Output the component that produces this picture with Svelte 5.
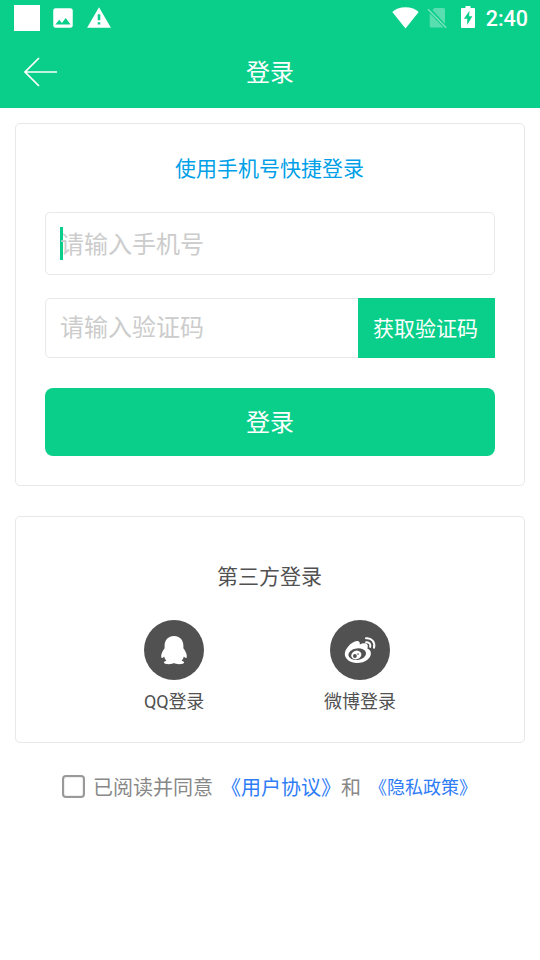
<script lang="ts">
	let phone = $state('');
	let code = $state('');
	let agreed = $state(false);
</script>

<div class="screen">
	<header>
		<div class="status">
			<div class="notices">
				<span class="square"></span>
				<svg width="26" height="26" viewBox="0 0 24 24" fill="#fff">
					<path d="M21 19V5c0-1.100-.9-2-2-2H5c-1.100 0-2 .9-2 2v14c0 1.100.9 2 2 2h14c1.100 0 2-.9 2-2zM8.500 13.500l2.500 3.010L14.500 12l4.500 6H5l3.500-4.500z" />
				</svg>
				<svg width="26" height="26" viewBox="0 0 24 24" fill="#fff">
					<path d="M1 21h22L12 2 1 21zm12.200-3h-2.400v-2h2.400v2zm0-4h-2.400V8.500h2.400V14z" />
				</svg>
			</div>
			<div class="system">
				<svg width="27" height="22" viewBox="0 0 27 22" fill="#fff">
					<path d="M13.500 21.500L.3 5C3.500 2.300 8 .3 13.500.3S23.500 2.300 26.700 5z" />
				</svg>
				<svg class="sim" width="20" height="22" viewBox="0 0 20 22">
					<path d="M7.500 1H16.500Q18 1 18 2.500V16.700L5.400 3.100zM2.700 6.300L16.500 20.500H4.200Q2.700 20.500 2.700 19z" fill="#fff" opacity=".32" />
					<path d="M1 2.300L19.200 20.700" stroke="#fff" stroke-width="1.500" opacity=".45" />
				</svg>
				<svg class="battery" width="14" height="22" viewBox="0 0 14 22">
					<path d="M4.500 0h5v2H13q1 0 1 1v18q0 1-1 1H1q-1 0-1-1V3q0-1 1-1h3.500z" fill="#fff" />
					<path d="M8.500 4.800L2.900 12.700h3.300v6.400l5.200-8.900H8.100z" fill="#0acf8b" />
				</svg>
				<span class="time">2:40</span>
			</div>
		</div>
		<div class="navbar">
			<button class="back" aria-label="返回">
				<svg width="36" height="32" viewBox="0 0 36 32" fill="none" stroke="#fff" stroke-width="1.700">
					<path d="M17 2L3 16l14 14M3 16h32" />
				</svg>
			</button>
			<h1>登录</h1>
		</div>
	</header>

	<main>
		<section class="card login">
			<h2>使用手机号快捷登录</h2>
			<div class="field phone">
				<span class="caret"></span>
				<input type="tel" placeholder="请输入手机号" bind:value={phone} />
			</div>
			<div class="field code">
				<input type="text" placeholder="请输入验证码" bind:value={code} />
				<button class="send">获取验证码</button>
			</div>
			<button class="submit">登录</button>
		</section>

		<section class="card third">
			<h2>第三方登录</h2>
			<div class="providers">
				<button class="provider">
					<svg width="60" height="60" viewBox="0 0 60 60">
						<circle cx="30" cy="30" r="30" fill="#515151" />
						<path
							d="M30 16c-5.900 0-9.400 4.300-9.400 9.800v2.400c-1.600 2.300-3.400 5.200-3.400 7.800 0 1.500.5 2.100 1 2 .7-.1 1.300-.7 1.900-1.500.4 1.700 1.100 3.100 2.200 4.200-1.500.5-2.400 1.100-2.400 1.900 0 1.300 2.300 1.600 4.900 1.600 2.300 0 4.200-.4 5.200-1.100 1 .7 2.900 1.100 5.200 1.100 2.600 0 4.900-.3 4.900-1.600 0-.8-.9-1.400-2.400-1.900 1.100-1.100 1.800-2.500 2.200-4.200.6.8 1.200 1.400 1.900 1.500.5.1 1-.5 1-2 0-2.600-1.800-5.500-3.400-7.800v-2.400C39.400 20.300 35.900 16 30 16z"
							fill="#fff"
						/>
					</svg>
					<span class="qq">QQ登录</span>
				</button>
				<button class="provider">
					<svg width="60" height="60" viewBox="0 0 60 60">
						<circle cx="30" cy="30" r="30" fill="#515151" />
						<path
							d="M28.400 21.300c-3-1-7.400 1.900-10.200 5.200-2.200 2.500-3.400 5-3.400 7.500 0 5.200 5.600 8.900 12.100 8.900 8.500 0 14-4.900 14-9.500 0-2.700-1.700-4.200-3.600-4.900.9-2.200.6-4-.7-4.700-1.700-.9-4.300-.5-6.900.6.3-1.500 0-2.700-1.300-3.100z"
							fill="#fff"
						/>
						<ellipse cx="27.200" cy="34.200" rx="8.900" ry="5.800" fill="#515151" transform="rotate(-7 27.200 34.200)" />
						<ellipse cx="26.300" cy="35" rx="5.200" ry="4.300" fill="#fff" transform="rotate(-20 26.300 35)" />
						<circle cx="24.900" cy="36" r="1.900" fill="#515151" />
						<circle cx="28" cy="34" r=".8" fill="#515151" />
						<path d="M36 18.200c5.400-.6 9.500 4 8 9.600M36.200 22.300c2.900-.4 4.700 1.800 4 4.600" fill="none" stroke="#fff" stroke-width="2" stroke-linecap="round" />
					</svg>
					<span>微博登录</span>
				</button>
			</div>
		</section>

		<div class="agreement">
			<label>
				<input type="checkbox" bind:checked={agreed} />
				<span>已阅读并同意</span>
			</label>
			<a class="terms" href="#terms">《用户协议》</a>
			<span>和</span>
			<a class="privacy" href="#privacy">《隐私政策》</a>
		</div>
	</main>
</div>

<style>
	:global(body) {
		background: #fff;
	}

	.screen {
		--green: #0acf8b;
		--line: #e8e8e8;
		box-sizing: border-box;
		width: 540px;
		height: 960px;
		overflow: hidden;
		background: #fff;
		font-family: Roboto, 'Noto Sans CJK SC', sans-serif;
	}

	.screen * {
		box-sizing: border-box;
	}

	svg {
		display: block;
	}

	button {
		padding: 0;
		border: 0;
		background: none;
		color: inherit;
		font: inherit;
	}

	h1,
	h2 {
		margin: 0;
		font-weight: 400;
		text-align: center;
	}

	header {
		height: 108px;
		background: var(--green);
		color: #fff;
	}

	.status {
		display: flex;
		justify-content: space-between;
		height: 36px;
		padding: 0 12px 0 14px;
	}

	.notices,
	.system {
		display: flex;
		align-items: center;
	}

	.notices {
		gap: 10px;
	}

	.square {
		width: 26px;
		height: 26px;
		background: #fff;
	}

	.system svg {
		margin-top: -1px;
	}

	.system .sim {
		margin: 0 14px 0 8px;
	}

	.system .battery {
		margin-top: -2px;
	}

	.time {
		margin-left: 11px;
		padding-top: 2px;
		font-size: 21.5px;
		font-weight: 500;
		line-height: 24px;
	}

	.navbar {
		display: grid;
		grid-template-columns: 60px 1fr 60px;
		align-items: center;
		height: 72px;
	}

	.back {
		padding-left: 22px;
	}

	h1 {
		padding-top: 2px;
		font-size: 24px;
		line-height: 36px;
	}

	main {
		padding: 15px;
	}

	.card {
		border: 1px solid var(--line);
		border-radius: 5px;
	}

	.login {
		height: 363px;
		padding: 30px 29px 29px;
	}

	.login h2 {
		margin-bottom: 28px;
		color: #009fe8;
	}

	h2 {
		padding-right: 1px;
		font-size: 21px;
		line-height: 30px;
	}

	.field {
		display: flex;
		position: relative;
		border: 1px solid var(--line);
		border-radius: 5px;
	}

	.phone {
		height: 63px;
		margin-bottom: 23px;
	}

	.phone input {
		padding-top: 3px;
	}

	.code {
		height: 60px;
		margin-bottom: 30px;
	}

	.field input {
		position: relative;
		flex: 1;
		min-width: 0;
		padding-right: 14px;
		padding-left: 14px;
		border: 0;
		outline: none;
		background: transparent;
		color: #333;
		font: inherit;
		font-size: 24px;
	}

	.field input::placeholder {
		color: #ccc;
		opacity: 1;
	}

	/* Sits under the placeholder, at the start of the text */
	.caret {
		position: absolute;
		top: 14px;
		left: 14px;
		width: 3px;
		height: 33px;
		background: var(--green);
	}

	.send {
		width: 137px;
		margin: -1px -1px -1px 0;
		padding: 0 2px 2px 0;
		background: var(--green);
		color: #fff;
		font-size: 21px;
	}

	.submit {
		width: 100%;
		height: 68px;
		padding-bottom: 4px;
		border-radius: 8px;
		background: var(--green);
		color: #fff;
		font-size: 24px;
	}

	.third {
		height: 227px;
		margin-top: 30px;
		padding-top: 45px;
		color: #515151;
	}

	.providers {
		display: flex;
		justify-content: center;
		gap: 102px;
		margin-top: 28px;
		padding-right: 6px;
	}

	.provider {
		display: flex;
		flex-direction: column;
		align-items: center;
		width: 84px;
		font-size: 18px;
		line-height: 26px;
	}

	.provider span {
		margin-top: 9px;
		white-space: nowrap;
	}

	.provider .qq {
		letter-spacing: -0.2px;
	}

	.agreement {
		display: flex;
		align-items: center;
		height: 30px;
		margin-top: 28px;
		padding-left: 47px;
		color: #888;
		font-size: 20px;
		white-space: nowrap;
	}

	.agreement label {
		display: flex;
		align-items: center;
		gap: 8px;
	}

	.agreement input {
		appearance: none;
		width: 23px;
		height: 23px;
		margin: 0;
		border: 2px solid #999;
		border-radius: 4px;
		background: #fff;
		box-shadow: inset 0 0 1px 1px #eee;
	}

	.agreement input:checked {
		background: var(--green);
	}

	.agreement a {
		margin-left: 8px;
		color: #2f7df6;
		text-decoration: none;
	}

	.agreement .privacy {
		font-size: 18px;
	}
</style>
